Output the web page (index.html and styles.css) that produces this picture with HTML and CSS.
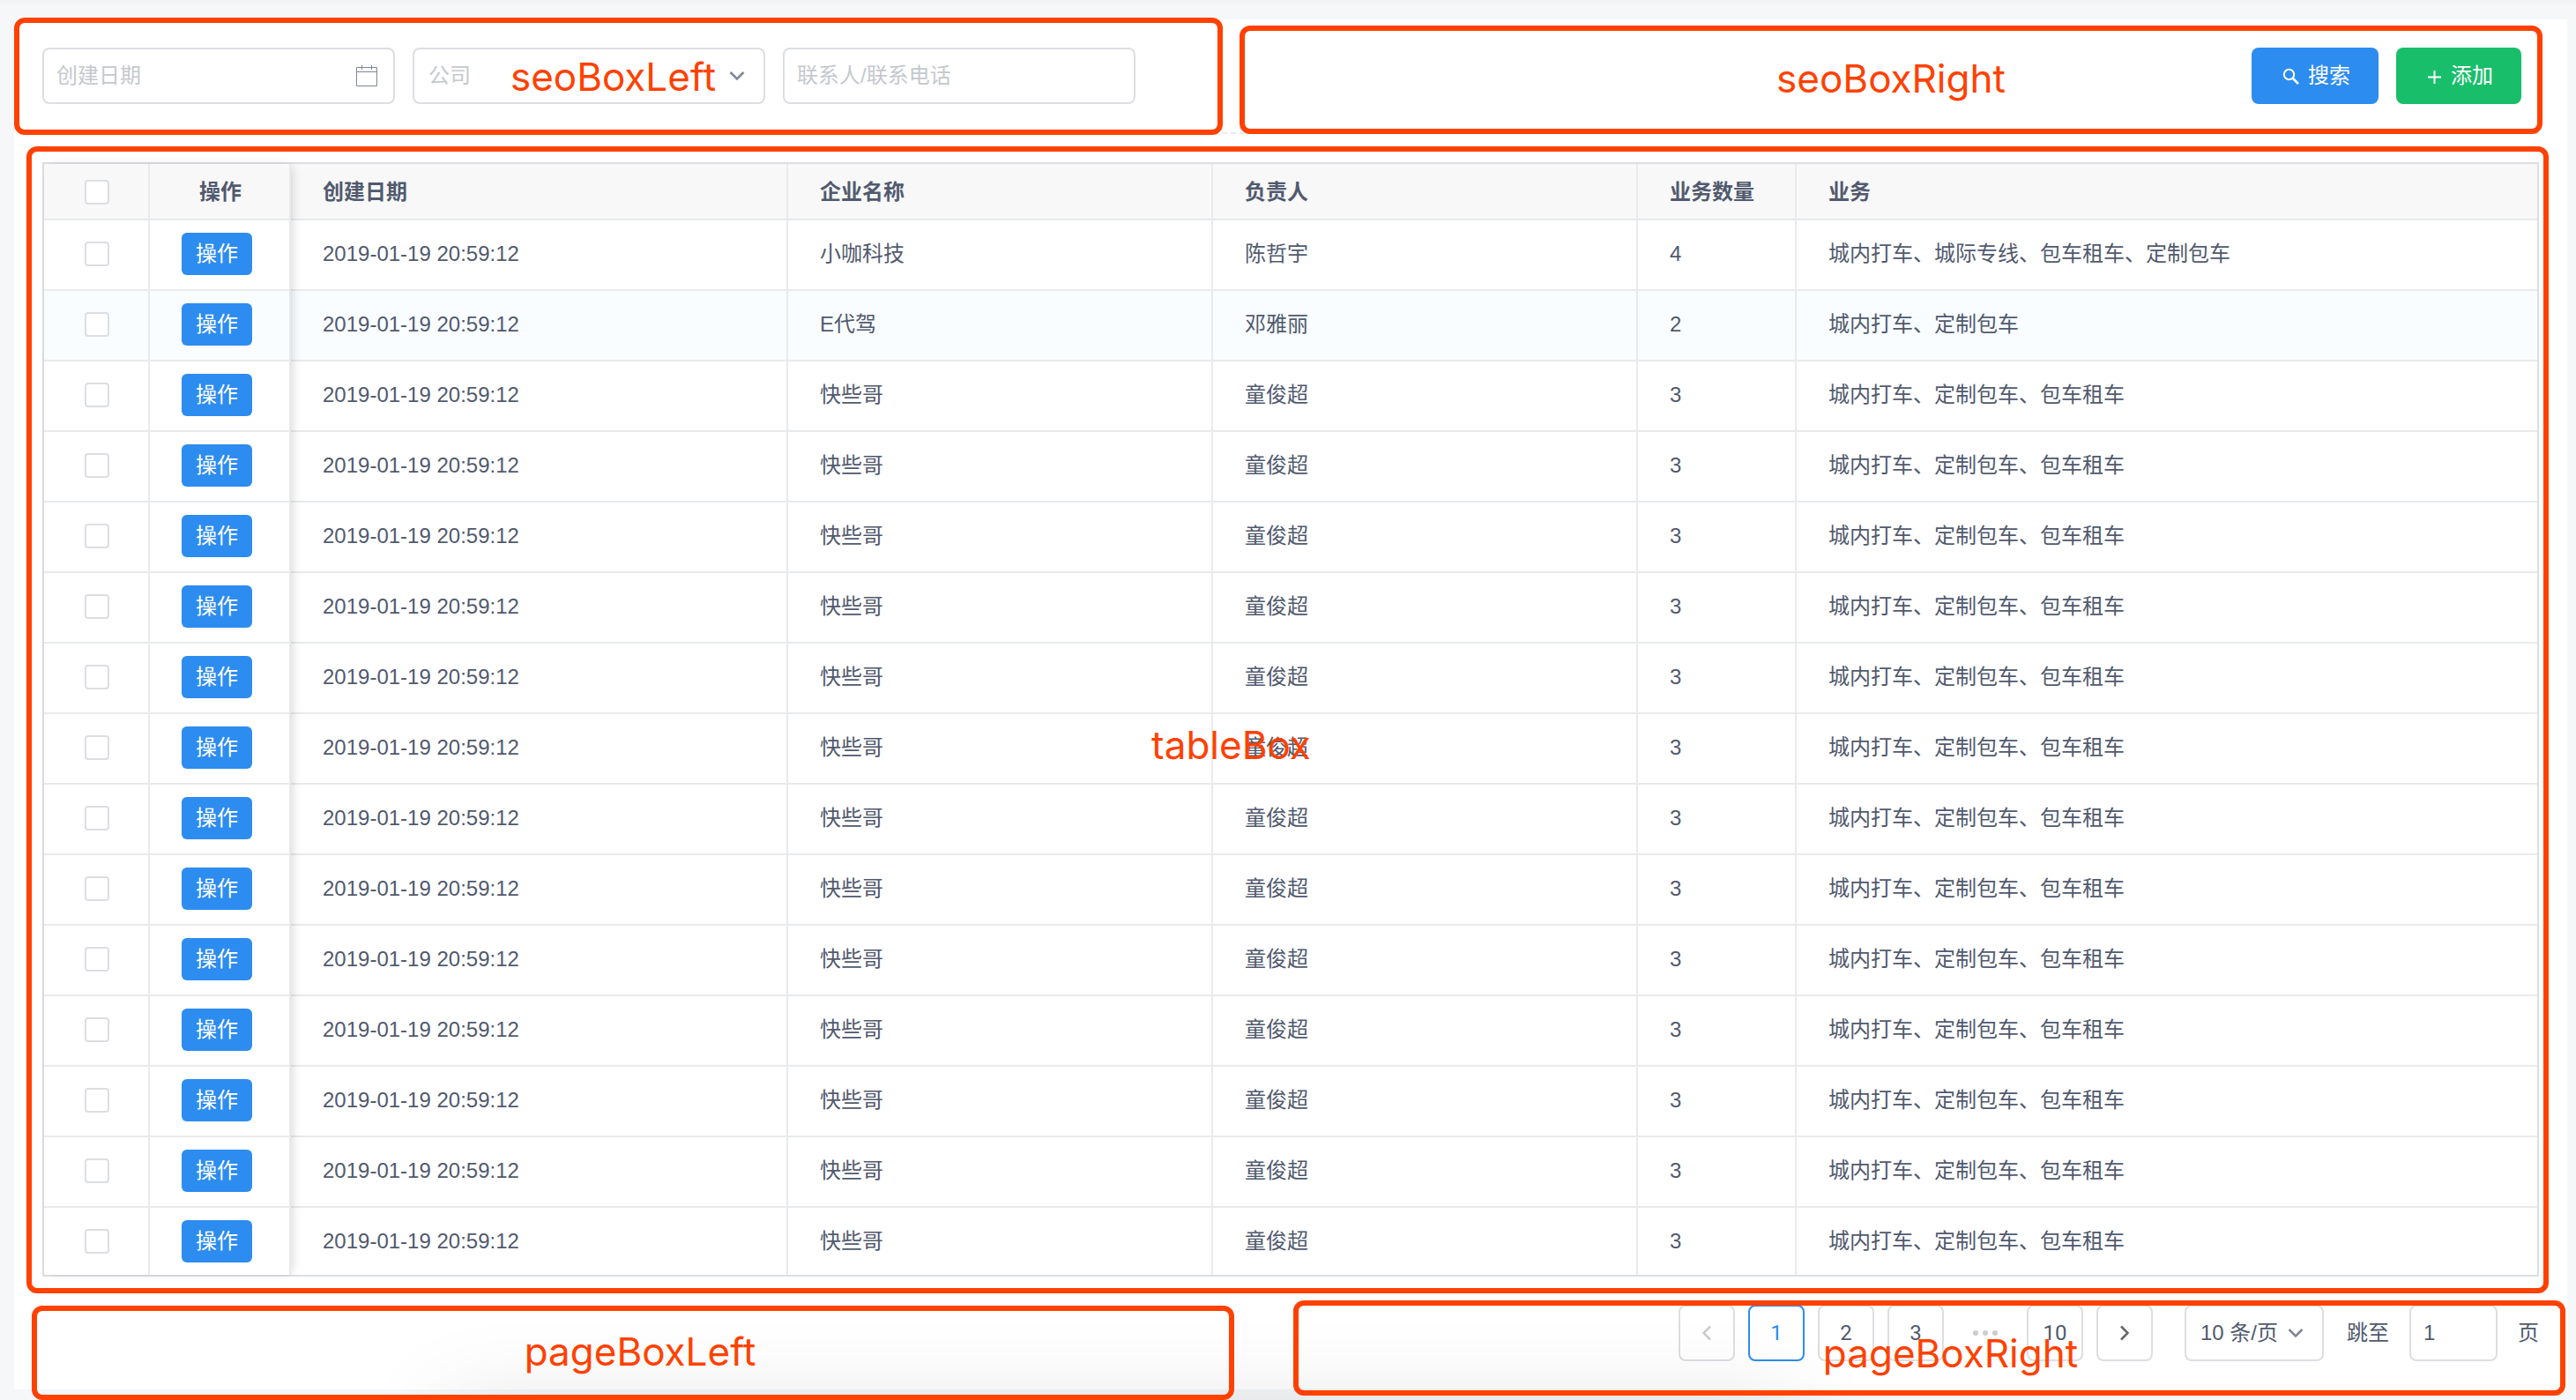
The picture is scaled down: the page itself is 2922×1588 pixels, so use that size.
FILE: index.html
```html
<!DOCTYPE html>
<html lang="zh-CN">
<head>
<meta charset="utf-8">
<title>企业管理</title>
<link rel="stylesheet" href="styles.css">
</head>
<body>
<main class="page">
  <div class="card">
    <form class="seo-box">
      <div class="seo-left">
        <div class="field">
          <input class="control" type="text" placeholder="创建日期" aria-label="创建日期">
          <svg class="icon-calendar" viewBox="0 0 24 24" fill="none" stroke="currentColor"><path d="M.5 2.5h23v21H.5zM.5 7.5h23M6.500 0v5M17.500 0v5"/></svg>
        </div>
        <div class="field">
          <select class="control is-empty" aria-label="公司"><option>公司</option></select>
          <svg class="icon-arrow" viewBox="0 0 18 12" fill="none" stroke="currentColor" stroke-width="2.500"><path d="M1.500 2 9 9.500 16.500 2"/></svg>
        </div>
        <div class="field">
          <input class="control" type="text" placeholder="联系人/联系电话" aria-label="联系人/联系电话">
        </div>
        <div class="frame frame-seo-left"><span>seoBoxLeft</span></div>
      </div>
      <div class="seo-right">
        <button class="btn btn-primary" type="button">
          <svg width="24" height="24" viewBox="0 0 24 24" fill="none" stroke="currentColor" stroke-width="2"><circle cx="10.500" cy="10.500" r="5.700"/><path d="M14.500 14.500 21 21" stroke-width="2.600"/></svg>搜索</button>
        <button class="btn btn-success" type="button">
          <svg width="22" height="24" viewBox="0 0 22 24" fill="none" stroke="currentColor" stroke-width="2"><path d="M4 13.500h15M11.500 6v15"/></svg>添加</button>
        <div class="frame frame-seo-right"><span>seoBoxRight</span></div>
      </div>
    </form>

    <div class="table-box">
      <table class="table">
        <colgroup><col class="col-check"><col class="col-action"><col class="col-date"><col class="col-name"><col class="col-name"><col class="col-count"><col></colgroup>
        <thead>
          <tr><th class="cell-check"><input type="checkbox" aria-label="全选"></th><th class="cell-center">操作</th><th>创建日期</th><th>企业名称</th><th>负责人</th><th>业务数量</th><th>业务</th></tr>
        </thead>
        <tbody>
          <tr><td class="cell-check"><input type="checkbox" aria-label="选择"></td><td><button class="btn-small" type="button">操作</button></td><td>2019-01-19 20:59:12</td><td>小咖科技</td><td>陈哲宇</td><td>4</td><td>城内打车、城际专线、包车租车、定制包车</td></tr>
          <tr class="is-hover"><td class="cell-check"><input type="checkbox" aria-label="选择"></td><td><button class="btn-small" type="button">操作</button></td><td>2019-01-19 20:59:12</td><td>E代驾</td><td>邓雅丽</td><td>2</td><td>城内打车、定制包车</td></tr>
          <tr><td class="cell-check"><input type="checkbox" aria-label="选择"></td><td><button class="btn-small" type="button">操作</button></td><td>2019-01-19 20:59:12</td><td>快些哥</td><td>童俊超</td><td>3</td><td>城内打车、定制包车、包车租车</td></tr>
          <tr><td class="cell-check"><input type="checkbox" aria-label="选择"></td><td><button class="btn-small" type="button">操作</button></td><td>2019-01-19 20:59:12</td><td>快些哥</td><td>童俊超</td><td>3</td><td>城内打车、定制包车、包车租车</td></tr>
          <tr><td class="cell-check"><input type="checkbox" aria-label="选择"></td><td><button class="btn-small" type="button">操作</button></td><td>2019-01-19 20:59:12</td><td>快些哥</td><td>童俊超</td><td>3</td><td>城内打车、定制包车、包车租车</td></tr>
          <tr><td class="cell-check"><input type="checkbox" aria-label="选择"></td><td><button class="btn-small" type="button">操作</button></td><td>2019-01-19 20:59:12</td><td>快些哥</td><td>童俊超</td><td>3</td><td>城内打车、定制包车、包车租车</td></tr>
          <tr><td class="cell-check"><input type="checkbox" aria-label="选择"></td><td><button class="btn-small" type="button">操作</button></td><td>2019-01-19 20:59:12</td><td>快些哥</td><td>童俊超</td><td>3</td><td>城内打车、定制包车、包车租车</td></tr>
          <tr><td class="cell-check"><input type="checkbox" aria-label="选择"></td><td><button class="btn-small" type="button">操作</button></td><td>2019-01-19 20:59:12</td><td>快些哥</td><td>童俊超</td><td>3</td><td>城内打车、定制包车、包车租车</td></tr>
          <tr><td class="cell-check"><input type="checkbox" aria-label="选择"></td><td><button class="btn-small" type="button">操作</button></td><td>2019-01-19 20:59:12</td><td>快些哥</td><td>童俊超</td><td>3</td><td>城内打车、定制包车、包车租车</td></tr>
          <tr><td class="cell-check"><input type="checkbox" aria-label="选择"></td><td><button class="btn-small" type="button">操作</button></td><td>2019-01-19 20:59:12</td><td>快些哥</td><td>童俊超</td><td>3</td><td>城内打车、定制包车、包车租车</td></tr>
          <tr><td class="cell-check"><input type="checkbox" aria-label="选择"></td><td><button class="btn-small" type="button">操作</button></td><td>2019-01-19 20:59:12</td><td>快些哥</td><td>童俊超</td><td>3</td><td>城内打车、定制包车、包车租车</td></tr>
          <tr><td class="cell-check"><input type="checkbox" aria-label="选择"></td><td><button class="btn-small" type="button">操作</button></td><td>2019-01-19 20:59:12</td><td>快些哥</td><td>童俊超</td><td>3</td><td>城内打车、定制包车、包车租车</td></tr>
          <tr><td class="cell-check"><input type="checkbox" aria-label="选择"></td><td><button class="btn-small" type="button">操作</button></td><td>2019-01-19 20:59:12</td><td>快些哥</td><td>童俊超</td><td>3</td><td>城内打车、定制包车、包车租车</td></tr>
          <tr><td class="cell-check"><input type="checkbox" aria-label="选择"></td><td><button class="btn-small" type="button">操作</button></td><td>2019-01-19 20:59:12</td><td>快些哥</td><td>童俊超</td><td>3</td><td>城内打车、定制包车、包车租车</td></tr>
          <tr><td class="cell-check"><input type="checkbox" aria-label="选择"></td><td><button class="btn-small" type="button">操作</button></td><td>2019-01-19 20:59:12</td><td>快些哥</td><td>童俊超</td><td>3</td><td>城内打车、定制包车、包车租车</td></tr>
        </tbody>
      </table>
      <div class="fixed-shadow"></div>
      <div class="frame frame-table"><span>tableBox</span></div>
    </div>

    <div class="page-box">
      <div class="page-left">
        <div class="frame frame-page-left"><span>pageBoxLeft</span></div>
      </div>
      <div class="page-right">
        <nav class="pager" aria-label="分页">
          <button class="pager-item is-disabled" type="button" aria-label="上一页"><svg width="12" height="18" viewBox="0 0 12 18" fill="none" stroke="currentColor" stroke-width="2.500"><path d="M10 1.500 2.500 9 10 16.500"/></svg></button>
          <button class="pager-item is-active" type="button">1</button>
          <button class="pager-item" type="button">2</button>
          <button class="pager-item" type="button">3</button>
          <button class="pager-item pager-more" type="button" aria-label="更多"><svg width="28" height="6" viewBox="0 0 28 6" fill="currentColor"><circle cx="3" cy="3" r="3"/><circle cx="14" cy="3" r="3"/><circle cx="25" cy="3" r="3"/></svg></button>
          <button class="pager-item" type="button">10</button>
          <button class="pager-item pager-next" type="button" aria-label="下一页"><svg width="12" height="18" viewBox="0 0 12 18" fill="none" stroke="currentColor" stroke-width="2.500"><path d="M2 1.500 9.500 9 2 16.500"/></svg></button>
        </nav>
        <div class="page-size">
          <select class="control" aria-label="每页条数"><option>10 条/页</option></select>
          <svg class="icon-arrow" viewBox="0 0 18 12" fill="none" stroke="currentColor" stroke-width="2.500"><path d="M1.500 2 9 9.500 16.500 2"/></svg>
        </div>
        <div class="jump">
          <label for="jump">跳至</label>
          <input class="control" id="jump" type="text" value="1">
          <span>页</span>
        </div>
        <div class="frame frame-page-right"><span>pageBoxRight</span></div>
      </div>
    </div>
  </div>
  <div class="dock-shadow"></div>
</main>
</body>
</html>
```

FILE: styles.css
```css
* {
  box-sizing: border-box;
}

body {
  margin: 0;
  background: #f5f7f9;
  color: #515a6e;
  font: 24px/36px "Liberation Sans", "Noto Sans CJK SC", sans-serif;
}

button,
input,
select {
  margin: 0;
  font: inherit;
  color: inherit;
}

.page {
  position: relative;
  min-height: 100vh;
  padding: 22px 10px 12px 16px;
  overflow: hidden;
  background: linear-gradient(#f0f2f4, #f5f7f9 8px);
}

.card {
  padding: 32px;
  background: #fff;
}

/* search bar */
.seo-box {
  display: flex;
  padding: 0 20px 32px 0;
  border-bottom: 2px dashed #e8eaec;
}

.seo-left {
  position: relative;
  display: flex;
  gap: 20px;
}

.seo-right {
  position: relative;
  display: flex;
  flex: 1;
  justify-content: flex-end;
  gap: 20px;
  margin-left: 118px;
}

.field {
  position: relative;
  width: 400px;
}

.control {
  display: block;
  width: 100%;
  height: 64px;
  padding: 0 14px;
  border: 2px solid #dcdee2;
  border-radius: 8px;
  background: transparent;
  appearance: none;
  outline: none;
}

.control::placeholder {
  color: #c5c8ce;
  opacity: 1;
}

.control.is-empty {
  padding: 0 16px;
  color: #c5c8ce;
}

.icon-calendar {
  position: absolute;
  top: 20px;
  right: 20px;
  width: 24px;
  height: 24px;
  color: #808695;
  pointer-events: none;
}

.icon-arrow {
  position: absolute;
  top: 26px;
  right: 23px;
  width: 18px;
  height: 12px;
  color: #808695;
  pointer-events: none;
}

.btn {
  display: flex;
  align-items: center;
  gap: 8px;
  height: 64px;
  padding: 0 32px;
  border: 0;
  border-radius: 8px;
  color: #fff;
}

.btn-primary {
  background: #2d8cf0;
}

.btn-success {
  background: #19be6b;
}

/* table */
.table-box {
  position: relative;
  margin: 32px 0;
  border: 2px solid #dcdee2;
}

.table {
  width: 100%;
  table-layout: fixed;
  border-collapse: separate;
  border-spacing: 0;
}

.col-check {
  width: 120px;
}

.col-action {
  width: 160px;
}

.col-date {
  width: 564px;
}

.col-name {
  width: 482px;
}

.col-count {
  width: 180px;
}

.table th,
.table td {
  height: 80px;
  padding: 0 34px 2px 36px;
  border-right: 2px solid #e8eaec;
  border-bottom: 2px solid #e8eaec;
  text-align: left;
  white-space: nowrap;
}

.table th {
  height: 64px;
  padding-top: 2px;
  padding-bottom: 0;
  background: #f8f8f9;
}

.table th:last-child,
.table td:last-child {
  border-right: 0;
}

.table tr:last-child td {
  height: 76px;
  padding-bottom: 0;
  border-bottom: 0;
}

.table .is-hover td {
  background: #f9fdff;
}

.table .cell-check,
.table .cell-center {
  padding-right: 0;
  padding-left: 2px;
  text-align: center;
}

.table input {
  display: block;
  width: 28px;
  height: 28px;
  margin: 0 auto;
  border: 2px solid #dcdee2;
  border-radius: 4px;
  background: #fff;
  appearance: none;
}

.btn-small {
  display: block;
  width: 80px;
  height: 48px;
  padding: 0;
  border: 0;
  border-radius: 6px;
  background: #2d8cf0;
  color: #fff;
}

.fixed-shadow {
  position: absolute;
  top: 0;
  bottom: 0;
  left: 0;
  width: 280px;
  box-shadow: 4px 0 12px -4px rgba(0, 0, 0, 0.2);
  pointer-events: none;
}

/* pagination */
.page-box {
  display: grid;
  grid-template-columns: 1fr 1fr;
  gap: 66px;
}

.page-left {
  position: relative;
}

.page-right {
  position: relative;
  display: flex;
  justify-content: flex-end;
}

.pager {
  display: flex;
  gap: 15px;
}

.pager-item {
  display: flex;
  align-items: center;
  justify-content: center;
  width: 64px;
  height: 64px;
  padding: 0;
  border: 2px solid #dcdee2;
  border-radius: 8px;
  background: transparent;
  font-family: Roboto, sans-serif;
}

.pager-item.is-active {
  border-color: #2d8cf0;
  color: #2d8cf0;
}

.pager-item.is-disabled,
.pager-item.pager-more {
  color: #ccc;
}

.pager-item.pager-next {
  color: #666;
}

.pager-item.pager-more {
  border-color: transparent;
}

.page-size {
  position: relative;
  width: 158px;
  margin: 0 26px 0 36px;
}

.page-size .control {
  padding: 0 16px;
}

.jump {
  display: flex;
  align-items: center;
  gap: 23px;
}

.jump .control {
  width: 100px;
}

/* labelled outlines over each layout area */
.frame {
  position: absolute;
  z-index: 2;
  display: flex;
  align-items: center;
  justify-content: center;
  border: 6px solid #ff4100;
  border-radius: 12px;
  color: #ff4100;
  font: 44px/56px Inter, sans-serif;
  pointer-events: none;
}

.frame-seo-left {
  inset: -34px -99px -35px -32px;
  padding-right: 12px;
}

.frame-seo-right {
  inset: -25px -24px -34px 0;
  padding-bottom: 4px;
}

.frame-table {
  inset: -20px -13px -21px -20px;
  padding: 56px 128px 0 0;
}

.frame-page-left {
  inset: 1px 31px -44px -12px;
  padding: 0 0 4px 16px;
}

.frame-page-right {
  inset: -5px -30px -39px -30px;
  padding: 12px 0 0 48px;
}

.dock-shadow {
  position: absolute;
  top: 100%;
  right: 880px;
  left: 500px;
  height: 100px;
  box-shadow: 0 0 100px rgba(0, 0, 0, 0.1);
  pointer-events: none;
}
```
